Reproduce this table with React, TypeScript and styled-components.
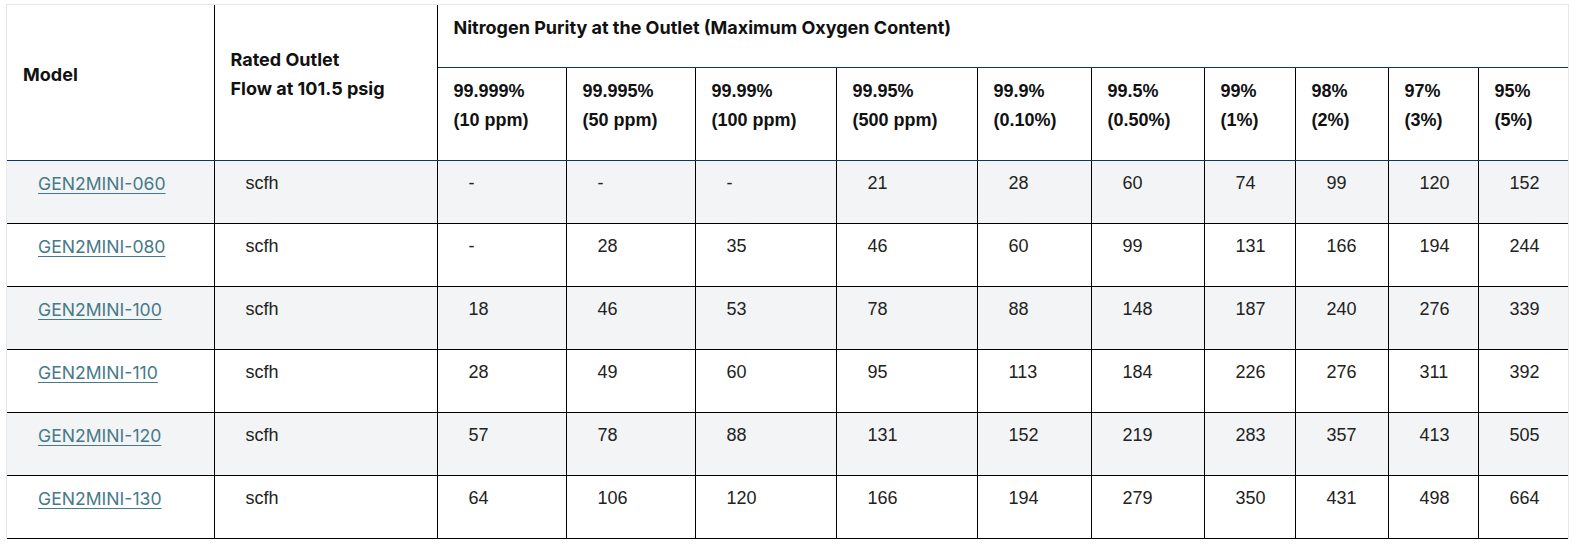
import React from "react";
import styled, { createGlobalStyle } from "styled-components";

const GlobalStyle = createGlobalStyle`
  html, body { margin: 0; padding: 0; background: #ffffff; }
  body { font-family: "Liberation Sans", Arial, sans-serif; color: #222222; }
`;

const Frame = styled.div`
  margin: 4px 0 0 6px;
  width: 1563px;
  box-sizing: border-box;
  border: 1px solid #e5e7eb;
  border-bottom: none;
`;

const Table = styled.table`
  width: 100%;
  border-collapse: collapse;
  table-layout: fixed;
`;

const HeadCell = styled.th<{ $last?: boolean; $sub?: boolean; $group?: boolean }>`
  font-family: ${(p) =>
    p.$sub ? `"Liberation Sans", Arial, sans-serif` : `"Inter", "Liberation Sans", Arial, sans-serif`};
  font-weight: 700;
  font-size: ${(p) => (p.$sub ? "18px" : "18px")};
  line-height: 29px;
  color: #111111;
  text-align: left;
  vertical-align: ${(p) => (p.$sub || p.$group ? "top" : "middle")};
  padding: ${(p) => (p.$sub ? "9px 16px 25px" : "8px 16px 25px")};
  border-right: ${(p) => (p.$last ? "none" : "1px solid #000000")};
  border-bottom: 1px solid #0b3764;
  white-space: nowrap;
`;

const Row = styled.tr<{ $shade: boolean }>`
  background: ${(p) => (p.$shade ? "#f3f4f6" : "#ffffff")};
`;

const Cell = styled.td<{ $last?: boolean; $model?: boolean }>`
  font-family: ${(p) =>
    p.$model ? `"Inter", "Liberation Sans", Arial, sans-serif` : `"Liberation Sans", Arial, sans-serif`};
  font-size: ${(p) => (p.$model ? "17.6px" : "18px")};
  line-height: 29px;
  height: 29px;
  color: #222222;
  vertical-align: top;
  padding: 8px 8px 25px 31px;
  border-right: ${(p) => (p.$last ? "none" : "1px solid #000000")};
  border-bottom: 1px solid #000000;
  white-space: nowrap;
  overflow: hidden;
`;

const ModelLink = styled.a`
  color: #467a88;
  text-decoration: underline;
  text-underline-offset: 3px;
`;

const widths = [207, 223, 129, 129, 141, 141, 114, 113, 91, 93, 90, 90];

const purities: [string, string][] = [
  ["99.999%", "(10 ppm)"],
  ["99.995%", "(50 ppm)"],
  ["99.99%", "(100 ppm)"],
  ["99.95%", "(500 ppm)"],
  ["99.9%", "(0.10%)"],
  ["99.5%", "(0.50%)"],
  ["99%", "(1%)"],
  ["98%", "(2%)"],
  ["97%", "(3%)"],
  ["95%", "(5%)"],
];

const rows: { model: string; values: string[] }[] = [
  { model: "GEN2MINI-060", values: ["-", "-", "-", "21", "28", "60", "74", "99", "120", "152"] },
  { model: "GEN2MINI-080", values: ["-", "28", "35", "46", "60", "99", "131", "166", "194", "244"] },
  { model: "GEN2MINI-100", values: ["18", "46", "53", "78", "88", "148", "187", "240", "276", "339"] },
  { model: "GEN2MINI-110", values: ["28", "49", "60", "95", "113", "184", "226", "276", "311", "392"] },
  { model: "GEN2MINI-120", values: ["57", "78", "88", "131", "152", "219", "283", "357", "413", "505"] },
  { model: "GEN2MINI-130", values: ["64", "106", "120", "166", "194", "279", "350", "431", "498", "664"] },
];

export default function App() {
  return (
    <>
      <GlobalStyle />
      <Frame>
        <Table>
          <colgroup>
            {widths.map((w, i) => (
              <col key={i} style={{ width: w }} />
            ))}
          </colgroup>
          <thead>
            <tr>
              <HeadCell rowSpan={2}>Model</HeadCell>
              <HeadCell rowSpan={2}>
                Rated Outlet
                <br />
                Flow at 101.5 psig
              </HeadCell>
              <HeadCell colSpan={10} $group $last>
                Nitrogen Purity at the Outlet (Maximum Oxygen Content)
              </HeadCell>
            </tr>
            <tr>
              {purities.map(([a, b], i) => (
                <HeadCell key={a} $sub $last={i === purities.length - 1}>
                  {a}
                  <br />
                  {b}
                </HeadCell>
              ))}
            </tr>
          </thead>
          <tbody>
            {rows.map((r, ri) => (
              <Row key={r.model} $shade={ri % 2 === 0}>
                <Cell $model>
                  <ModelLink href="#">{r.model}</ModelLink>
                </Cell>
                <Cell>scfh</Cell>
                {r.values.map((v, vi) => (
                  <Cell key={vi} $last={vi === r.values.length - 1}>
                    {v}
                  </Cell>
                ))}
              </Row>
            ))}
          </tbody>
        </Table>
      </Frame>
    </>
  );
}
